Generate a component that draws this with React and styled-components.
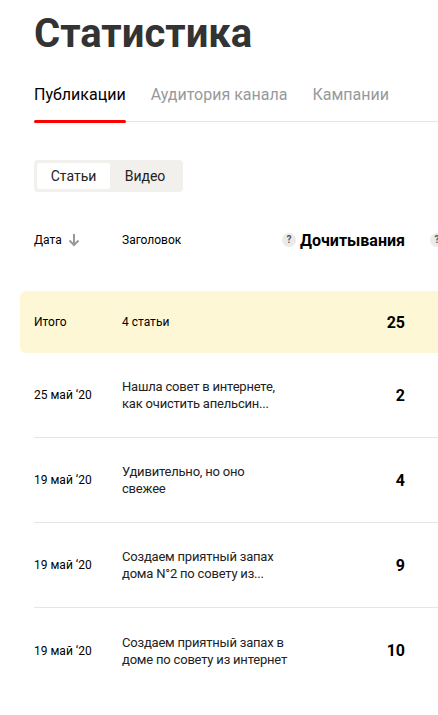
import styled, { createGlobalStyle } from "styled-components";

const GlobalStyle = createGlobalStyle`
	body {
		margin: 0;
		background: #fff;
		font-family: Roboto, "Noto Sans", Arial, sans-serif;
		color: #000;
	}
`;

const Page = styled.div`
	width: 438px;
	height: 715px;
	overflow: hidden;
	padding: 10px 0 0 34px;
	box-sizing: border-box;
`;

const Title = styled.h1`
	margin: 0;
	font-size: 40px;
	line-height: 48px;
	font-weight: 700;
	color: #333;
`;

const Tabs = styled.div`
	display: flex;
	gap: 25px;
	margin-top: 26px;
	border-bottom: 1px solid #e5e5e5;
`;

const Tab = styled.div`
	position: relative;
	font-size: 16px;
	line-height: 22px;
	padding-bottom: 15px;
	color: ${(p) => (p.active ? "#000" : "#999")};

	&::after {
		content: "";
		display: ${(p) => (p.active ? "block" : "none")};
		position: absolute;
		left: 0;
		right: 0;
		bottom: -2px;
		height: 3px;
		border-radius: 2px;
		background: #f00;
	}
`;

const Segment = styled.div`
	display: inline-flex;
	margin-top: 38px;
	padding: 3px;
	background: #f1f0ed;
	border-radius: 4px;
`;

const SegmentButton = styled.div`
	font-size: 14px;
	line-height: 26px;
	width: ${(p) => p.width}px;
	text-align: center;
	border-radius: 3px;
	background: ${(p) => (p.active ? "#fff" : "transparent")};
	color: #222;
`;

const Table = styled.div`
	margin-top: 33px;
	width: 440px;
`;

const Row = styled.div`
	display: flex;
	align-items: center;
	height: ${(p) => p.height || 85}px;
	border-bottom: ${(p) => (p.divided ? "1px solid #e5e5e5" : "none")};
	box-sizing: border-box;
`;

const TotalRow = styled(Row)`
	margin-left: -14px;
	padding-left: 14px;
	background: #fef7d5;
	border-radius: 6px;
	margin-top: 36px;
`;

const Main = styled.div`
	display: flex;
	align-items: center;
	width: 371px;
	flex-shrink: 0;
`;

const DateCell = styled.div`
	width: 88px;
	flex-shrink: 0;
	font-size: 12px;
	line-height: 16px;
	display: flex;
	align-items: center;
	gap: 6px;
`;

const HeadCell = styled.div`
	flex: 1;
	font-size: 12px;
	line-height: 16px;
`;

const TitleCell = styled.div`
	flex: 1;
	max-width: 168px;
	font-size: 13px;
	letter-spacing: -0.2px;
	line-height: 17px;
	color: #222;
`;

const ValueCell = styled.div`
	margin-left: auto;
	display: flex;
	align-items: center;
	gap: 4px;
	font-size: 16px;
	font-weight: 700;
	white-space: nowrap;
`;

const Hint = styled.span`
	display: inline-flex;
	flex-shrink: 0;
	align-items: center;
	justify-content: center;
	width: 14px;
	height: 14px;
	border-radius: 50%;
	background: #ebebeb;
	color: #555;
	font-size: 10px;
	line-height: 1;
	font-weight: 700;
`;

const NextCol = styled.div`
	padding-left: 25px;
	display: flex;
`;

function ArrowDown() {
	return (
		<svg width="12" height="14" viewBox="0 0 12 14" fill="none">
			<path d="M6 1v11M1.5 7.5 6 12l4.5-4.5" stroke="#999" strokeWidth="2" />
		</svg>
	);
}

const rows = [
	{ date: "25 май ‘20", title: "Нашла совет в интернете, как очистить апельсин...", value: 2 },
	{ date: "19 май ‘20", title: "Удивительно, но оно свежее", value: 4 },
	{ date: "19 май ‘20", title: "Создаем приятный запах дома N°2 по совету из...", value: 9 },
	{ date: "19 май ‘20", title: "Создаем приятный запах в доме по совету из интернет", value: 10 },
];

export default function App() {
	return (
		<Page>
			<GlobalStyle />
			<Title>Статистика</Title>
			<Tabs>
				<Tab active>Публикации</Tab>
				<Tab>Аудитория канала</Tab>
				<Tab>Кампании</Tab>
			</Tabs>
			<Segment>
				<SegmentButton active width={73}>Статьи</SegmentButton>
				<SegmentButton width={70}>Видео</SegmentButton>
			</Segment>
			<Table>
				<Row height={30}>
					<Main>
						<DateCell>
							Дата <ArrowDown />
						</DateCell>
						<HeadCell>Заголовок</HeadCell>
						<ValueCell>
							<Hint>?</Hint>Дочитывания
						</ValueCell>
					</Main>
					<NextCol>
						<Hint>?</Hint>
					</NextCol>
				</Row>
				<TotalRow height={62}>
					<Main>
						<DateCell>Итого</DateCell>
						<HeadCell>4 статьи</HeadCell>
						<ValueCell>25</ValueCell>
					</Main>
				</TotalRow>
				{rows.map((r, i) => (
					<Row key={i} divided={i < rows.length - 1}>
						<Main>
							<DateCell>{r.date}</DateCell>
							<TitleCell>{r.title}</TitleCell>
							<ValueCell>{r.value}</ValueCell>
						</Main>
					</Row>
				))}
			</Table>
		</Page>
	);
}
